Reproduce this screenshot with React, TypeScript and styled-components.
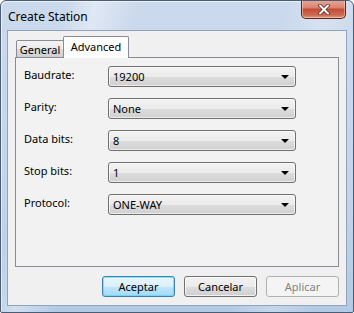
import React from "react";
import styled, { createGlobalStyle, css } from "styled-components";

const GlobalStyle = createGlobalStyle`
  html, body {
    margin: 0;
    padding: 0;
    background: #ffffff;
  }
  body {
    font-family: "Noto Sans", "Open Sans", Arial, sans-serif;
    font-size: 11px;
    color: #000000;
  }
`;

const Window = styled.div`
  box-sizing: border-box;
  width: 354px;
  height: 313px;
  border: 1px solid #4a5d75;
  border-radius: 6px 6px 2px 2px;
  display: flex;
  flex-direction: column;
  padding: 0 6px 6px 6px;
  background:
    linear-gradient(105deg, transparent 15%, rgba(255, 255, 255, 0.4) 22%, transparent 32%),
    linear-gradient(100deg, transparent 70%, rgba(255, 255, 255, 0.25) 80%, transparent 90%),
    linear-gradient(180deg, #cbd9ec 0%, #c3d5eb 60%, #b3c9e4 100%);
  box-shadow: inset 1px 1px 0 rgba(255, 255, 255, 0.6);
  overflow: hidden;
`;

const TitleBar = styled.div`
  height: 29px;
  display: flex;
  align-items: flex-start;
  justify-content: space-between;
  flex-shrink: 0;
`;

const Title = styled.span`
  margin-top: 7px;
  margin-left: 1px;
  font-size: 12px;
  color: #000000;
`;

const CloseButton = styled.div`
  box-sizing: border-box;
  width: 45px;
  height: 19px;
  margin-top: -1px;
  margin-right: 1px;
  border: 1px solid #5b2319;
  border-top: none;
  border-radius: 0 0 5px 5px;
  background: linear-gradient(
    180deg,
    #e9a99b 0%,
    #d9806c 45%,
    #c24a33 50%,
    #cf6b54 85%,
    #e59c86 100%
  );
  box-shadow: inset 0 0 0 1px rgba(255, 220, 210, 0.5);
  display: flex;
  align-items: center;
  justify-content: center;
`;

const Client = styled.div`
  flex: 1;
  box-sizing: border-box;
  border: 1px solid #8fa3bd;
  background: #f0f0f0;
  padding: 5px 7px 8px 7px;
  display: flex;
  flex-direction: column;
`;

const TabRow = styled.div`
  display: flex;
  align-items: flex-end;
  height: 21px;
  padding-left: 1px;
  flex-shrink: 0;
`;

const Tab = styled.div<{ $active?: boolean }>`
  box-sizing: border-box;
  border: 1px solid #898c95;
  border-bottom: none;
  border-radius: 2px 2px 0 0;
  display: flex;
  align-items: center;
  justify-content: center;
  font-size: 11px;
  ${(p) =>
    p.$active
      ? css`
          width: 66px;
          height: 22px;
          margin-bottom: -1px;
          margin-left: -1px;
          padding-bottom: 3px;
          background: #fdfdfd;
          position: relative;
          z-index: 1;
        `
      : css`
          width: 48px;
          height: 17px;
          padding-top: 1px;
          background: linear-gradient(180deg, #f3f3f3 0%, #ebebeb 50%, #dddddd 51%, #cfcfcf 100%);
        `}
`;

const Panel = styled.div`
  box-sizing: border-box;
  height: 210px;
  border: 1px solid #898c95;
  background: #f2f2f2;
  padding: 8px 0 0 8px;
  display: flex;
  flex-direction: column;
  gap: 11px;
`;

const FieldRow = styled.div`
  display: grid;
  grid-template-columns: 84px 188px;
  align-items: start;
  height: 21px;
`;

const Label = styled.span`
  padding-top: 1px;
  font-size: 11px;
`;

const Combo = styled.div`
  box-sizing: border-box;
  height: 21px;
  border: 1px solid #707070;
  border-radius: 3px;
  background: linear-gradient(180deg, #f2f2f2 0%, #ebebeb 50%, #dddddd 51%, #cfcfcf 100%);
  box-shadow: inset 0 0 0 1px rgba(255, 255, 255, 0.6);
  display: flex;
  align-items: center;
  justify-content: space-between;
  padding: 0 6px 0 4px;
  font-size: 11px;
`;

const Arrow = styled.span`
  width: 0;
  height: 0;
  border-left: 4px solid transparent;
  border-right: 4px solid transparent;
  border-top: 4px solid #000000;
  margin-top: 1px;
`;

const ButtonBar = styled.div`
  display: flex;
  justify-content: flex-end;
  gap: 9px;
  margin-top: 9px;
`;

const Button = styled.div<{ $variant?: "default" | "disabled" }>`
  box-sizing: border-box;
  width: 73px;
  height: 21px;
  border: 1px solid #707070;
  border-radius: 3px;
  background: linear-gradient(180deg, #f2f2f2 0%, #ebebeb 50%, #dddddd 51%, #cfcfcf 100%);
  box-shadow: inset 0 0 0 1px rgba(255, 255, 255, 0.7);
  display: flex;
  align-items: center;
  justify-content: center;
  font-size: 11px;
  color: #000000;
  ${(p) =>
    p.$variant === "default" &&
    css`
      border-color: #3c7fb1;
      background: linear-gradient(180deg, #eaf6fd 0%, #d9f0fc 50%, #bee6fd 51%, #a7d9f5 100%);
      box-shadow: inset 0 0 0 1px rgba(72, 216, 251, 0.6);
    `}
  ${(p) =>
    p.$variant === "disabled" &&
    css`
      border-color: #adb2b5;
      background: #f4f4f4;
      box-shadow: none;
      color: #838383;
    `}
`;

const fields = [
  { label: "Baudrate:", value: "19200" },
  { label: "Parity:", value: "None" },
  { label: "Data bits:", value: "8" },
  { label: "Stop bits:", value: "1" },
  { label: "Protocol:", value: "ONE-WAY" },
];

export default function App() {
  return (
    <>
      <GlobalStyle />
      <Window>
        <TitleBar>
          <Title>Create Station</Title>
          <CloseButton>
            <svg width="12" height="11" viewBox="0 0 12 11">
              <path d="M2 1.5 L10 9.5 M10 1.5 L2 9.5" stroke="#5b2a22" strokeWidth="3.6" strokeLinecap="round" />
              <path d="M2 1.5 L10 9.5 M10 1.5 L2 9.5" stroke="#ffffff" strokeWidth="2" strokeLinecap="round" />
            </svg>
          </CloseButton>
        </TitleBar>
        <Client>
          <TabRow>
            <Tab>General</Tab>
            <Tab $active>Advanced</Tab>
          </TabRow>
          <Panel>
            {fields.map((f) => (
              <FieldRow key={f.label}>
                <Label>{f.label}</Label>
                <Combo>
                  <span>{f.value}</span>
                  <Arrow />
                </Combo>
              </FieldRow>
            ))}
          </Panel>
          <ButtonBar>
            <Button $variant="default">Aceptar</Button>
            <Button>Cancelar</Button>
            <Button $variant="disabled">Aplicar</Button>
          </ButtonBar>
        </Client>
      </Window>
    </>
  );
}
